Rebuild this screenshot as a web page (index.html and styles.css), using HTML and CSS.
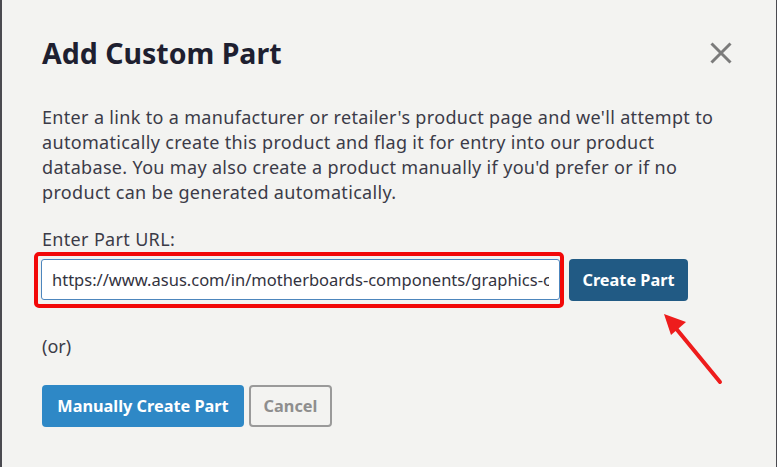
FILE: index.html
```html
<!DOCTYPE html>
<html lang="en">
<head>
<meta charset="utf-8">
<title>Add Custom Part</title>
<link rel="stylesheet" href="styles.css">
</head>
<body>
<div class="dialog">
  <div class="header">
    <h1 class="title">Add Custom Part</h1>
    <button class="close" aria-label="Close">
      <svg width="22" height="22" viewBox="0 0 22 22"><path d="M1.5 1.5 L20.5 20.5 M20.5 1.5 L1.5 20.5" stroke="#7b7b7b" stroke-width="3" fill="none"/></svg>
    </button>
  </div>
  <p class="intro">Enter a link to a manufacturer or retailer's product page and we'll attempt to automatically create this product and flag it for entry into our product database. You may also create a product manually if you'd prefer or if no product can be generated automatically.</p>
  <label class="label" for="url">Enter Part URL:</label>
  <div class="url-row">
    <div class="highlight">
      <input id="url" class="url-input" type="text" value="https://www.asus.com/in/motherboards-components/graphics-cards/">
    </div>
    <button class="btn btn-dark">Create Part</button>
  </div>
  <p class="or">(or)</p>
  <div class="actions">
    <button class="btn btn-blue">Manually Create Part</button>
    <button class="btn btn-outline">Cancel</button>
  </div>
  <svg class="arrow" width="70" height="80" viewBox="0 0 70 80">
    <path d="M62 74 L16 18" stroke="#ee1c1c" stroke-width="4" stroke-linecap="round" fill="none"/>
    <path d="M6 6 L28 14 L13 27 Z" fill="#ee1c1c"/>
  </svg>
</div>
</body>
</html>
```
FILE: styles.css
```css
html, body {
  margin: 0;
  padding: 0;
}
body {
  background: #4a4a50;
  height: 467px;
  overflow: hidden;
  font-family: "Noto Sans", "Open Sans", sans-serif;
}
.dialog {
  position: relative;
  margin: 0 1px 0 2px;
  height: 467px;
  box-sizing: border-box;
  background: #f3f3f1;
  padding: 30px 40px 0 40px;
  color: #3b3b48;
}
.header {
  display: flex;
  justify-content: space-between;
  align-items: center;
  height: 46px;
}
.title {
  margin: 0;
  font-size: 28.5px;
  font-weight: 700;
  color: #1e1f30;
}
.close {
  border: 0;
  background: none;
  padding: 0;
  margin-right: 4px;
  width: 22px;
  height: 22px;
  display: flex;
  cursor: pointer;
}
.intro {
  margin: 29px 0 0 0;
  max-width: 684px;
  font-size: 18px;
  letter-spacing: 0.33px;
  line-height: 25px;
}
.label {
  display: block;
  margin-top: 22px;
  font-size: 18px;
  letter-spacing: 0.33px;
  line-height: 25px;
}
.url-row {
  display: flex;
  align-items: center;
  gap: 5px;
  margin-top: 0;
  margin-left: -8px;
}
.highlight {
  border: 4px solid #f20808;
  border-radius: 5px;
  padding: 3px 0 4px 3px;
  display: flex;
}
.url-input {
  width: 519px;
  height: 41px;
  box-sizing: border-box;
  border: 1px solid #4d86bd;
  border-radius: 3px;
  background: #fff;
  padding: 0 10px;
  font-family: "Noto Sans", sans-serif;
  font-size: 16.5px;
  color: #333340;
  outline: none;
}
.btn {
  font-family: "Noto Sans", sans-serif;
  font-weight: 700;
  font-size: 16.3px;
  border-radius: 4px;
  height: 42px;
  box-sizing: border-box;
  cursor: pointer;
}
.btn-dark {
  background: #215a84;
  color: #fff;
  border: 0;
  width: 119px;
}
.or {
  margin: 26px 0 0 0;
  font-size: 18px;
  line-height: 25px;
}
.actions {
  display: flex;
  gap: 5px;
  margin-top: 26px;
}
.btn-blue {
  background: #2e88c6;
  color: #fff;
  border: 0;
  width: 202px;
}
.btn-outline {
  background: transparent;
  color: #8e8e8e;
  border: 2px solid #9a9a9a;
  width: 83px;
}
.arrow {
  position: absolute;
  left: 656px;
  top: 308px;
}
```
